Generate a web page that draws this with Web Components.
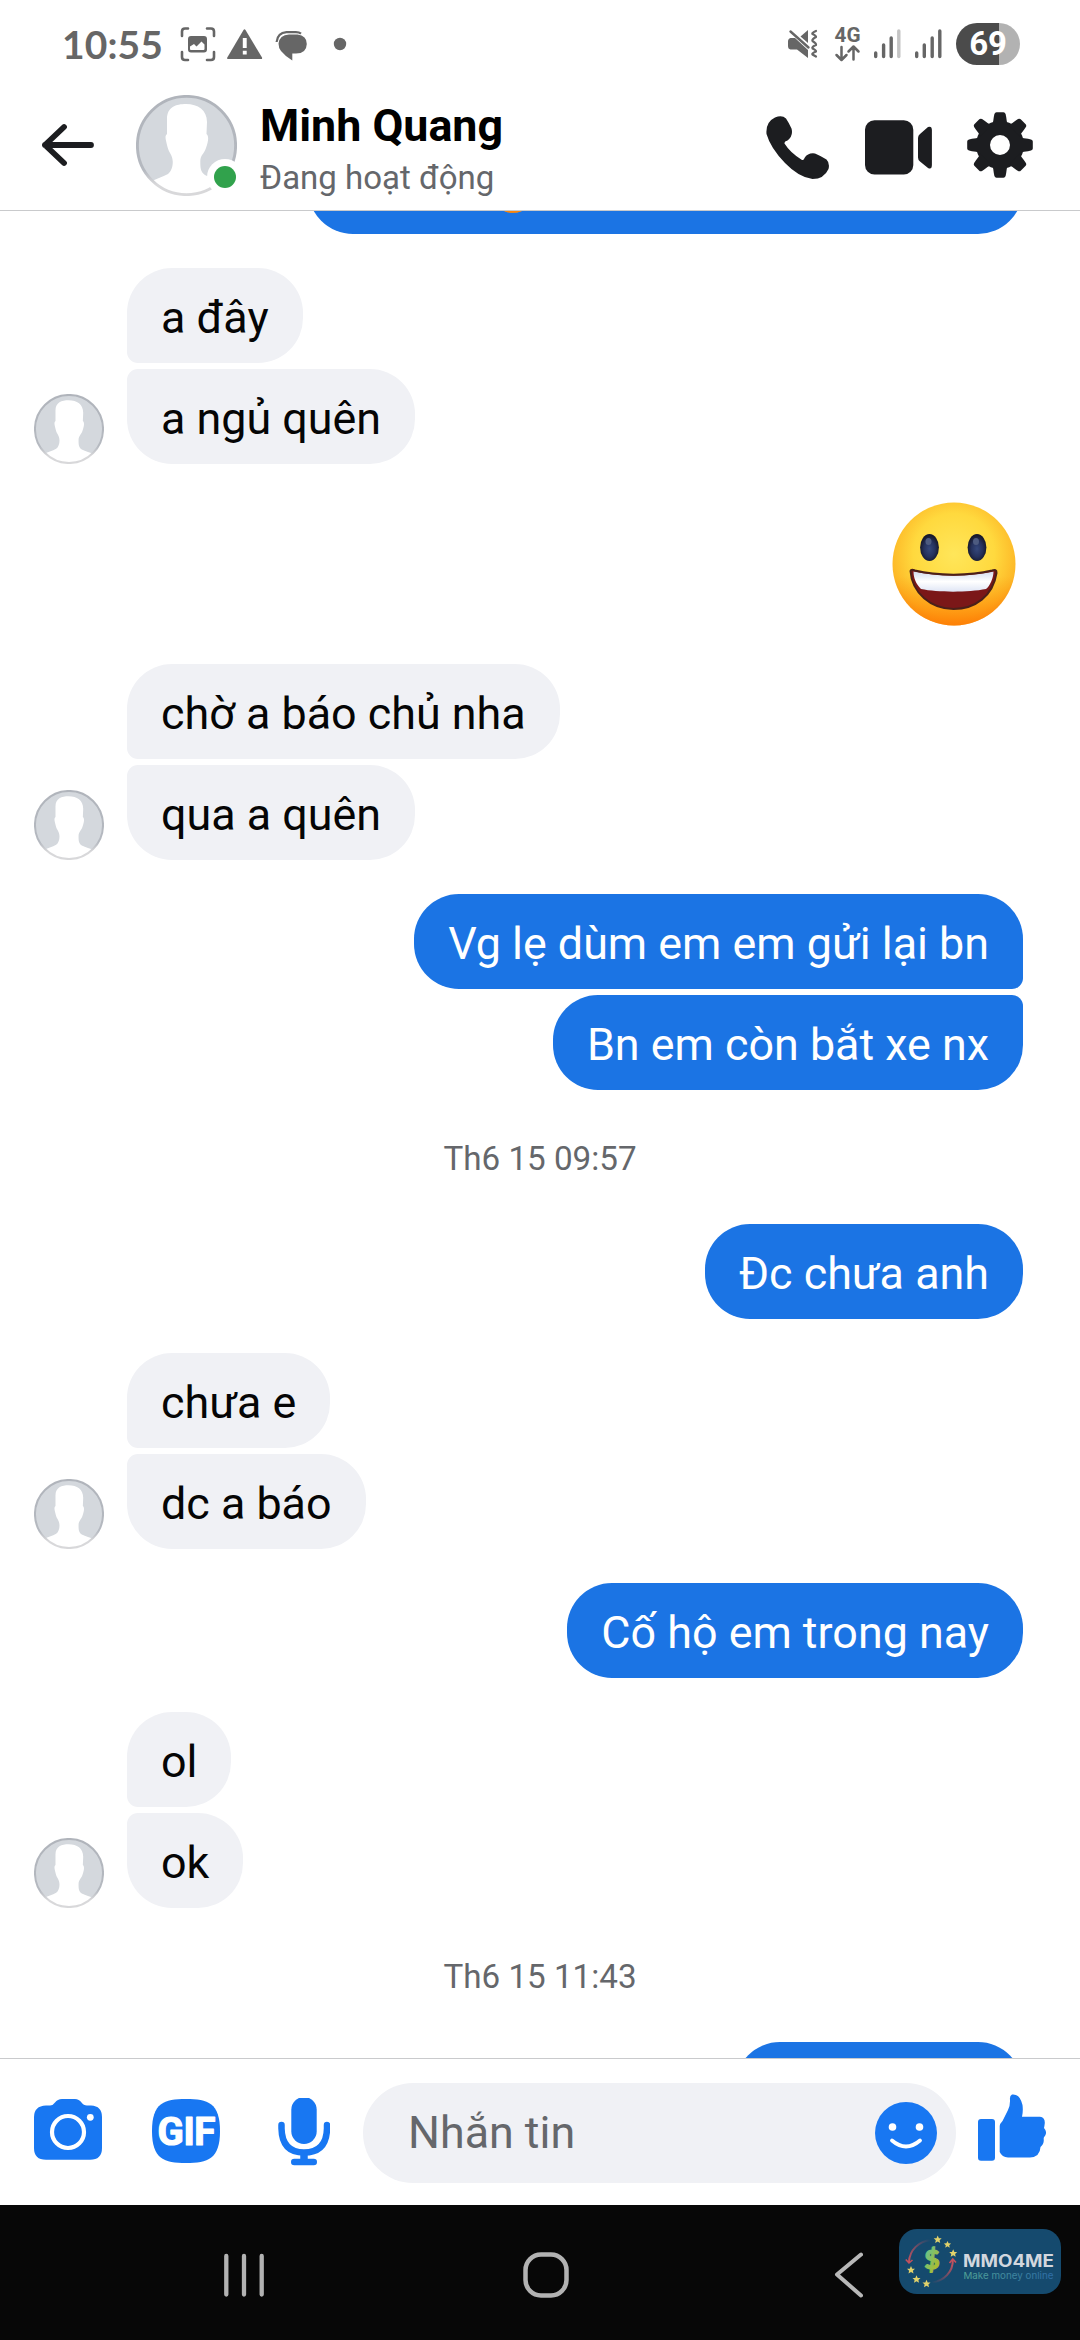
<!DOCTYPE html>
<html lang="vi">
<head>
<meta charset="utf-8">
<title>Minh Quang</title>
<style>
html,body{margin:0;padding:0;background:#fff}
body{font-family:Roboto,"Noto Sans",sans-serif;width:1080px;height:2340px;overflow:hidden}
</style>
</head>
<body>
<chat-app></chat-app>
<script>
function define(name, html) {
  const t = document.createElement('template');
  t.innerHTML = html;
  customElements.define(name, class extends HTMLElement {
    constructor() {
      super();
      this.attachShadow({ mode: 'open' }).appendChild(t.content.cloneNode(true));
    }
  });
}

/* Default profile picture */
define('user-avatar', `
<style>
:host{display:block;width:101px;height:101px;flex:none}
svg{display:block;width:100%;height:100%}
</style>
<svg viewBox="0 0 101 101">
  <defs>
    <clipPath id="c"><circle cx="50.5" cy="50.5" r="49"/></clipPath>
    <linearGradient id="g" x1="0" y1="0" x2="0" y2="1"><stop offset="0" stop-color="#b0b4bb"/><stop offset=".75" stop-color="#b5b9c0"/><stop offset=".9" stop-color="#d8d8da"/></linearGradient>
  </defs>
  <g clip-path="url(#c)">
    <circle cx="50.5" cy="50.5" r="50" fill="#d4d8dd"/>
    <path fill="#fff" d="M31 24C31 12 40 9 50 9C62 9 71 15 71 27L70.500 39C73 41 72.500 46 70 53C68 59 64.500 60 64.300 66C64.300 73 64.500 77 69 80C74 83 82 84 86 87L86 102L14 102L14 87C19 84 27 82 32 79C36 76 37 70 36.700 66C36.500 60 33 58 31.500 52C29.500 44 28.500 41 31 39Z"/>
  </g>
  <circle cx="50.500" cy="50.500" r="49.100" fill="none" stroke="url(#g)" stroke-width="2.900"/>
</svg>`);

/* One message */
define('chat-bubble', `
<style>
:host{display:flex;align-items:center;box-sizing:border-box;height:95px;padding:4px 34px 0;border-radius:45px;
 background:#f0f1f5;color:#050505;font-size:44.850px;line-height:53px;white-space:nowrap;flex:none}
:host([out]){background:#1b74e4;color:#fff}
:host([top]:not([out])){border-bottom-left-radius:11px}
:host([end]:not([out])){border-top-left-radius:11px}
:host([top][out]){border-bottom-right-radius:11px}
:host([end][out]){border-top-right-radius:11px}
</style><slot></slot>`);

define('incoming-group', `
<style>
:host{display:flex;align-items:flex-end;gap:23px;padding-left:34px}
user-avatar{width:70px;height:70px}
.list{display:flex;flex-direction:column;align-items:flex-start;gap:6px}
</style><user-avatar></user-avatar><div class="list"><slot></slot></div>`);

define('outgoing-group', `
<style>
:host{display:flex;flex-direction:column;align-items:flex-end;gap:6px;padding-right:57px}
</style><slot></slot>`);

define('time-stamp', `
<style>
:host{display:block;box-sizing:border-box;height:66px;line-height:64px;padding-top:3px;text-align:center;font-size:33.200px;color:#65676b}
</style><slot></slot>`);

define('grin-emoji', `
<style>:host{display:block;width:124px;height:124px;flex:none}svg{display:block;width:100%;height:100%}</style>
<svg viewBox="0 0 124 124">
  <defs>
    <radialGradient id="f" cx=".5" cy=".42" r=".6"><stop offset="0" stop-color="#ffe65a"/><stop offset=".55" stop-color="#ffd93e"/><stop offset=".85" stop-color="#fdb928"/><stop offset="1" stop-color="#f7981d"/></radialGradient>
    <linearGradient id="o" x1="0" y1="0" x2="0" y2="1"><stop offset=".6" stop-color="#ff8a00" stop-opacity="0"/><stop offset="1" stop-color="#ff7800" stop-opacity=".8"/></linearGradient>
    <linearGradient id="t" x1="0" y1="0" x2="0" y2="1"><stop offset="0" stop-color="#d3dcee"/><stop offset=".5" stop-color="#fff"/><stop offset="1" stop-color="#dfe5f5"/></linearGradient>
    <radialGradient id="e" cx=".5" cy=".55" r=".5"><stop offset="0" stop-color="#35487c"/><stop offset=".6" stop-color="#25315c"/><stop offset="1" stop-color="#17192c"/></radialGradient>
  </defs>
  <circle cx="62" cy="62" r="61.500" fill="url(#f)"/><circle cx="62" cy="62" r="61.500" fill="url(#o)"/>
  <ellipse cx="37.500" cy="45.500" rx="9.400" ry="13.500" fill="url(#e)"/><ellipse cx="85" cy="45.500" rx="9.400" ry="13.500" fill="url(#e)"/>
  <ellipse cx="36.500" cy="39.500" rx="3" ry="3.600" fill="#4d5b80"/><ellipse cx="84" cy="39.500" rx="3" ry="3.600" fill="#4d5b80"/>
  <path d="M18.500 69C19 67 21 67.500 23 68.500C45 74 78 74 100 68.500C103 67.500 104.700 68 104.500 71C101 94 83 107 61.500 107C39 107 20 91 18.500 69Z" fill="#7b1718"/>
  <path d="M21.500 69.500C45 75 78 75 101.500 69.500C101.500 76 98 84 94 87C76 90.500 46 90.500 29 87C24 82 21.500 76 21.500 69.500Z" fill="url(#t)"/>
  <path d="M18.500 69C19 67 21 67.500 23 68.500C45 74 78 74 100 68.500C103 67.500 104.700 68 104.500 71C101 94 83 107 61.500 107C39 107 20 91 18.500 69Z" fill="none" stroke="#4b2019" stroke-width="2"/>
</svg>`);

define('status-bar', `
<style>
:host{display:flex;align-items:center;height:80px;padding:8px 60px 0 62px;box-sizing:border-box;color:#666}
.time{font:bold 39px/40px Lato,sans-serif;width:118px;letter-spacing:.1px}
svg{display:block;flex:none}
.space{flex:1}
.battery{display:flex;align-items:center;justify-content:center;width:64px;height:42px;border-radius:21px;
 background:linear-gradient(90deg,#4b4b4b 67.500%,#b2b2b2 67.500%);color:#fff;font:bold 33px/42px Roboto,sans-serif;letter-spacing:-.3px}
</style>
<span class="time">10:55</span>
<svg width="170" height="42" viewBox="180 23 170 42" fill="#666">
  <path d="M188 28.500H185Q182 28.500 182 31.500V36M207 28.500H211Q214 28.500 214 31.500V36M182 52V57Q182 60 185 60H188M207 60H211Q214 60 214 57V52" fill="none" stroke="#666" stroke-width="2.600" stroke-linecap="round"/>
  <path fill-rule="evenodd" d="M191 36H204Q207 36 207 39V49.500Q207 52.500 204 52.500H191Q188 52.500 188 49.500V39Q188 36 191 36ZM190 46.500V49Q190 50 191 50H203.500Q204.500 50 204.500 49V44.500L201.500 41.500L196.500 46.500L194 44Z"/>
  <path d="M243.500 30Q244.500 28.500 245.500 30L262 57.500Q262.500 59 261 59H228Q226.500 59 227.300 57.500Z"/>
  <path d="M242.800 38H246.700V48H242.800ZM242.800 50.700H246.700V54.500H242.800Z" fill="#fff"/>
  <path d="M289 34.500H297.500Q306.800 35.500 306.800 44Q306.500 53.500 296 53.500H292.300V60.500Q285 56 281 51Q278.500 48 278.500 43.500Q279.500 35 289 34.500Z"/>
  <path d="M276.600 42Q277.500 33 286.500 32.200H295Q299 32 301 33.600" fill="none" stroke="#666" stroke-width="2.200"/>
  <circle cx="340" cy="44" r="6.200"/>
</svg>
<div class="space"></div>
<svg width="168" height="42" viewBox="787 23 168 42" fill="#666">
  <path d="M807 30V43L799.500 36.500Z"/>
  <path d="M789.500 38H794L807 50V58L796 49.500H789.500Q787 49 787 46V41.500Q787 38.500 789.500 38Z"/>
  <path d="M789.500 31.500L807.500 47.500" stroke="#666" stroke-width="2.400" stroke-linecap="round"/>
  <path d="M815 31Q810.500 33 811.500 34Q815.500 36 815 37Q810.500 39.500 811.500 41Q815.500 43.500 815 45Q810.500 47 811.500 48.500Q815.500 50.500 815 51.500Q810.500 53.500 811.500 54.500L815 56.500" fill="none" stroke="#666" stroke-width="2.200" stroke-linecap="round"/>
  <text x="833.500" y="42" font-family="Roboto" font-weight="700" font-size="19.500" textLength="26" lengthAdjust="spacingAndGlyphs">4G</text>
  <path d="M840.500 47V59M835.500 55L840.500 60L845.500 55M852.500 59.500V47.500M847.500 51.500L852.500 46.500L857.500 51.500" fill="none" stroke="#666" stroke-width="2.500" stroke-linecap="round" stroke-linejoin="round"/>
  <g stroke="#666" stroke-width="3.400" stroke-linecap="round">
    <path d="M874.700 53V56.500M882.600 45V56.500M890.200 38V56.500"/><path d="M897.800 31V56.500" stroke="#c4c4c4"/>
    <path d="M915.700 53V56.500M923.300 45V56.500M931.200 38V56.500M938.800 31V56.500"/>
  </g>
</svg>
<div class="battery">69</div>`);

define('chat-header', `
<style>
:host{display:flex;align-items:center;box-sizing:border-box;height:131px;padding:0 47px 0 42px;border-bottom:1px solid #c9cacc;background:#fff}
svg{display:block;flex:none}
.who{display:flex;align-items:center;gap:23px;margin-left:42px}
.pic{position:relative}
.dot{position:absolute;left:78px;top:71px;width:22px;height:22px;border-radius:50%;background:#31a24c;box-shadow:0 0 0 7px #fff}
.name{font-size:44.800px;line-height:52px;font-weight:700;color:#000;white-space:nowrap}
.sub{font-size:33px;line-height:38px;color:#65676b;margin-top:7px;white-space:nowrap}
.txt{padding-top:6px}
.actions{display:flex;align-items:center;margin-left:auto}
</style>
<svg width="52" height="44" viewBox="42 123 52 44"><path d="M91 145H45M64 127L45 145L64 163" fill="none" stroke="#1c1d20" stroke-width="5.800" stroke-linecap="round" stroke-linejoin="round"/></svg>
<div class="who">
  <div class="pic"><user-avatar></user-avatar><div class="dot"></div></div>
  <div class="txt"><div class="name">Minh Quang</div><div class="sub">Đang hoạt động</div></div>
</div>
<div class="actions">
<svg width="267" height="70" viewBox="766 110 267 70" fill="#1c1d20">
  <path d="M775 117.500Q782 114.500 786 118.500Q789 123 791.500 128.500Q793.500 136 787.500 140.500Q784 141.500 784.500 143.500Q790 152.500 802 160Q804 160.500 804.500 158Q808 152.500 815 153.500Q821 156 826.500 159.500Q830 163 828.500 169Q824 179 812.500 179Q799 177.500 785 163Q770.500 148 766.500 134Q765.500 122 775 117.500Z"/>
  <rect x="865" y="120.300" width="48.300" height="54.300" rx="9.500"/>
  <path d="M918 138Q918 135.500 920 134L928 127Q931.800 125.500 931.900 130V165Q931.800 170 928 168L920 161.500Q918 160 918 157.500Z"/>
  <g transform="translate(1000 145)">
    <path fill-rule="evenodd" d="M0-24A24 24 0 1 1 0 24A24 24 0 1 1 0-24ZM0-10A10 10 0 1 0 0 10A10 10 0 1 0 0-10Z"/>
    <path id="a" d="M-7.800-20Q-6.500-24-6.200-28L-5.600-31Q-5-32.800-3.500-32.800H3.500Q5-32.800 5.600-31L6.200-28Q6.500-24 7.800-20Z"/>
    <use href="#a" transform="rotate(45)"/><use href="#a" transform="rotate(90)"/><use href="#a" transform="rotate(135)"/>
    <use href="#a" transform="rotate(180)"/><use href="#a" transform="rotate(225)"/><use href="#a" transform="rotate(270)"/><use href="#a" transform="rotate(315)"/>
  </g>
</svg>
</div>`);

define('message-list', `
<style>
:host{display:block;height:1847px;overflow:hidden;background:#fff}
.flow{display:flex;flex-direction:column;gap:34px;margin-top:-72px}
.cut{width:715px;padding-left:183px}
.cut grin-emoji{width:44px;height:44px;margin-top:5px}
.next{width:288px}
.big{padding:4px 7px 4px 0}
</style>
<div class="flow">
  <outgoing-group><chat-bubble out class="cut"><grin-emoji></grin-emoji></chat-bubble></outgoing-group>
  <incoming-group><chat-bubble top>a đây</chat-bubble><chat-bubble end>a ngủ quên</chat-bubble></incoming-group>
  <outgoing-group><grin-emoji class="big"></grin-emoji></outgoing-group>
  <incoming-group><chat-bubble top>chờ a báo chủ nha</chat-bubble><chat-bubble end>qua a quên</chat-bubble></incoming-group>
  <outgoing-group><chat-bubble out top>Vg lẹ dùm em em gửi lại bn</chat-bubble><chat-bubble out end>Bn em còn bắt xe nx</chat-bubble></outgoing-group>
  <time-stamp>Th6 15 09:57</time-stamp>
  <outgoing-group><chat-bubble out>Đc chưa anh</chat-bubble></outgoing-group>
  <incoming-group><chat-bubble top>chưa e</chat-bubble><chat-bubble end>dc a báo</chat-bubble></incoming-group>
  <outgoing-group><chat-bubble out>Cố hộ em trong nay</chat-bubble></outgoing-group>
  <incoming-group><chat-bubble top>ol</chat-bubble><chat-bubble end>ok</chat-bubble></incoming-group>
  <time-stamp>Th6 15 11:43</time-stamp>
  <outgoing-group><chat-bubble out class="next"></chat-bubble></outgoing-group>
</div>`);

define('message-composer', `
<style>
:host{display:flex;align-items:center;box-sizing:border-box;height:147px;padding:1px 34px 0;border-top:1px solid #c9cacc;background:#fff}
svg{display:block;flex:none}
.field{display:flex;align-items:center;justify-content:space-between;box-sizing:border-box;width:593px;height:100px;margin:0 22px 0 33px;
 padding:0 19px 0 45px;border-radius:50px;background:#f0f1f5;color:#65676b;font-size:44.800px}
</style>
<svg width="296" height="70" viewBox="34 2097 296 70" fill="#1877f2">
  <path d="M46 2104.500H50Q53 2104.500 55 2101.500Q57.500 2098 62 2098H75Q79 2098 81.500 2101.500Q83.500 2104.500 87 2104.500H91Q102 2105 102 2116V2147Q102 2158.800 90 2158.800H46Q34 2158.800 34 2147V2116Q34 2105 46 2104.500Z"/>
  <circle cx="68" cy="2131" r="16" fill="none" stroke="#fff" stroke-width="4.200"/><circle cx="90.300" cy="2116.300" r="3.400" fill="#fff"/>
  <path d="M186 2098C208 2098 220 2102 220 2130C220 2158 208 2162 186 2162C164 2162 152 2158 152 2130C152 2102 164 2098 186 2098Z"/>
  <text x="157.500" y="2144" font-family="Roboto" font-weight="700" font-size="38.500" fill="#fff" stroke="#fff" stroke-width="1.200" stroke-linejoin="round" textLength="58" lengthAdjust="spacing">GIF</text>
  <rect x="291.300" y="2096" width="25.400" height="47" rx="12.700"/>
  <path d="M281.500 2124V2127.500Q282 2151.500 304 2151.500Q326.500 2151.500 327 2127.500V2124" fill="none" stroke="#1877f2" stroke-width="6.500" stroke-linecap="round"/>
  <path d="M304 2152V2160" stroke="#1877f2" stroke-width="7.500"/><rect x="291" y="2157.700" width="26" height="6.600" rx="3.300"/>
</svg>
<div class="field"><span>Nhắn tin</span>
<svg width="62" height="62" viewBox="0 0 62 62"><circle cx="31" cy="31" r="31" fill="#1877f2"/><circle cx="17.500" cy="25" r="3.800" fill="#fff"/><circle cx="44.500" cy="25" r="3.800" fill="#fff"/><path d="M17 38.500Q31 50.500 45 38.500" fill="none" stroke="#fff" stroke-width="3.800" stroke-linecap="round"/></svg></div>
<svg width="68" height="78" viewBox="978 2093 68 78" fill="#1877f2">
  <rect x="978" y="2118" width="17" height="41.700" rx="3"/>
  <path d="M1012 2093.500Q1020 2092.500 1022.500 2104Q1023.300 2110 1022 2115.800H1040Q1045 2116.500 1044.800 2122Q1044.500 2125 1044 2127Q1047.500 2131 1045 2135Q1043.500 2136 1043.700 2138Q1044.300 2143 1040.500 2146Q1040 2156 1030 2156.500H1008Q1002 2156 999.700 2151V2125Q1000 2122.500 1002.500 2120L1008 2109Q1010.200 2105 1010 2099Q1009.500 2094.500 1012 2093.500Z"/>
</svg>`);

define('brand-badge', `
<style>:host{display:block;width:162px;height:65px;border-radius:18px;background:#154a6e;flex:none}svg{display:block}</style>
<svg width="162" height="65" viewBox="899 2229 162 65">
  <defs>
    <linearGradient id="d" x1="0" y1="0" x2="1" y2="1"><stop offset=".1" stop-color="#5fc29a"/><stop offset=".9" stop-color="#b8bd1c"/></linearGradient>
    <linearGradient id="m" x1="0" y1="0" x2="1" y2="0"><stop offset="0" stop-color="#52a596"/><stop offset="1" stop-color="#2e6ca8"/></linearGradient>
    <linearGradient id="r1" gradientUnits="userSpaceOnUse" x1="908" y1="2260" x2="931" y2="2240"><stop offset="0" stop-color="#c4515e"/><stop offset="1" stop-color="#c4515e" stop-opacity="0"/></linearGradient>
    <linearGradient id="r2" gradientUnits="userSpaceOnUse" x1="953" y1="2262" x2="932" y2="2283"><stop offset="0" stop-color="#c4515e"/><stop offset="1" stop-color="#c4515e" stop-opacity="0"/></linearGradient>
    <path id="s" d="M0-4L1.200-1.300L4-1.200L1.900.7L2.500 3.500L0 2L-2.500 3.500L-1.900.7L-4-1.200L-1.200-1.300Z" fill="#e2d26b"/>
  </defs>
  <path d="M909 2262C909.500 2250 919 2241 931 2240" fill="none" stroke="url(#r1)" stroke-width="2"/>
  <path d="M905.800 2259.500L909 2263L912.500 2260" fill="none" stroke="#c4515e" stroke-width="1.600"/>
  <path d="M952.800 2260C953 2272 944 2281 932 2282.500" fill="none" stroke="url(#r2)" stroke-width="2"/>
  <path d="M949.500 2263L952.800 2259L956 2262.500" fill="none" stroke="#c4515e" stroke-width="1.600"/>
  <use href="#s" x="937.700" y="2239.500"/><use href="#s" transform="translate(947.500 2244.500) scale(.9)"/><use href="#s" transform="translate(953.200 2253.300)"/>
  <use href="#s" transform="translate(911 2270)"/><use href="#s" transform="translate(916.500 2279.300)"/><use href="#s" transform="translate(926.500 2283.800)"/>
  <text x="932" y="2269" text-anchor="middle" font-family="Lato" font-weight="900" font-size="26" fill="url(#d)" stroke="url(#d)" stroke-width="1.200">$</text>
  <text x="963" y="2266.500" font-family="Inter" font-weight="700" font-size="17" fill="#d2d7de" textLength="91" lengthAdjust="spacingAndGlyphs">MMO4ME</text>
  <text x="963.500" y="2278.600" font-family="Inter" font-size="9.500" fill="url(#m)" textLength="90" lengthAdjust="spacingAndGlyphs">Make money online</text>
</svg>`);

define('nav-bar', `
<style>
:host{display:flex;align-items:center;box-sizing:border-box;height:135px;padding:5px 19px 0 224px;background:#070707}
svg{display:block;flex:none}
.home{margin-left:259px}.back{margin-left:265px}
brand-badge{margin:-27px 0 0 36px}
</style>
<svg width="40" height="46" viewBox="0 0 40 46"><path d="M2.300 4V42.500M20 4V42.500M37.700 4V42.500" stroke="#b2b2b2" stroke-width="4.300" stroke-linecap="round"/></svg>
<svg class="home" width="46" height="46" viewBox="0 0 46 46"><rect x="2.500" y="2.500" width="41" height="41" rx="15.500" fill="none" stroke="#b2b2b2" stroke-width="4.500"/></svg>
<svg class="back" width="29" height="46" viewBox="834 2252 29 46"><path d="M861 2254.500L837 2274.500L861 2295.500" fill="none" stroke="#b8b8b8" stroke-width="4" stroke-linecap="round" stroke-linejoin="round"/></svg>
<brand-badge></brand-badge>`);

define('chat-app', `
<style>:host{display:flex;flex-direction:column;width:1080px;height:2340px;background:#fff}</style>
<status-bar></status-bar>
<chat-header></chat-header>
<message-list></message-list>
<message-composer></message-composer>
<nav-bar></nav-bar>`);
</script>
</body>
</html>
